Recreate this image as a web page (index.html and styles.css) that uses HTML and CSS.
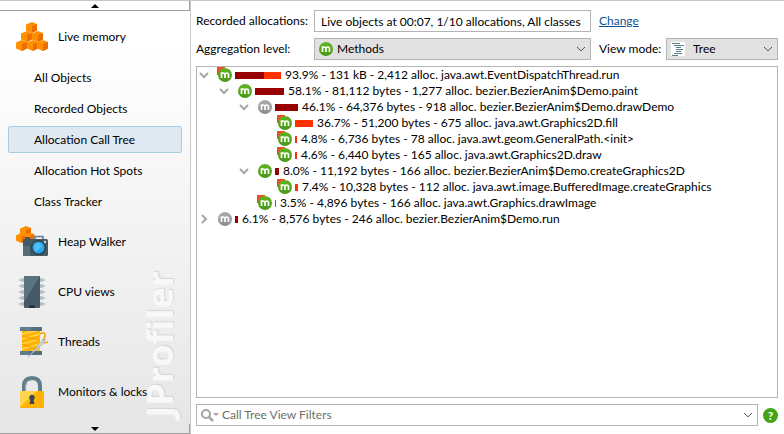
FILE: index.html
```
<!DOCTYPE html>
<html lang="en">
<head>
<meta charset="utf-8">
<title>JProfiler</title>
<link rel="stylesheet" href="styles.css">
</head>
<body>
<svg class="defs" aria-hidden="true">
  <defs>
    <linearGradient id="green" x1="0" y1="0" x2="0" y2="1"><stop offset="0" stop-color="#62b426"/><stop offset="1" stop-color="#479a12"/></linearGradient>
    <linearGradient id="gray" x1="0" y1="0" x2="0" y2="1"><stop offset="0" stop-color="#acacac"/><stop offset="1" stop-color="#8d8d8d"/></linearGradient>
    <symbol id="m" viewBox="0 0 14 14"><path d="M3.500 10V4.300M3.500 6Q3.800 5 5.200 5T7 6.500V10M7 6.500Q7.200 5 8.700 5T10.500 6.500V10" fill="none" stroke="#fff" stroke-width="1.700"/></symbol>
    <symbol id="method" viewBox="0 0 16 16"><circle cx="8" cy="8" r="7" fill="url(#green)"/><use href="#m" x="1" y="1" width="14" height="14"/></symbol>
    <symbol id="leaf" viewBox="0 0 16 16"><path d="M0 0H8V8H0Z" fill="#f04e23"/><circle cx="8" cy="8" r="7" fill="url(#green)"/><use href="#m" x="1" y="1" width="14" height="14"/></symbol>
    <symbol id="bridge" viewBox="0 0 16 16"><circle cx="8" cy="8" r="7" fill="url(#gray)"/><use href="#m" x="1" y="1" width="14" height="14"/></symbol>
    <symbol id="down" viewBox="0 0 10 6"><path d="M1 1L5 4.800L9 1" fill="none" stroke="currentColor"/></symbol>
    <symbol id="cube" viewBox="0 0 12 11"><path d="M0 2.500L6 0L11 2V8.500L6 11L0 8.500Z" fill="#ff9100"/><path d="M6 4L11 2V8.500L6 11Z" fill="#ef6c00"/></symbol>
  </defs>
</svg>
<div class="app">
  <nav class="sidebar">
    <button class="scroll" aria-label="Scroll up"><svg width="8" height="4" viewBox="0 0 8 4"><path d="M4 0L8 4H0Z"/></svg></button>
    <div class="views">
      <a class="section" href="#">
        <svg class="big" viewBox="0 0 32 32"><use href="#cube" x="10" y="1" width="12" height="11"/><use href="#cube" x="5" y="10" width="12" height="11"/><use href="#cube" x="16" y="10" width="12" height="11"/><use href="#cube" x="0" y="19" width="12" height="11"/><use href="#cube" x="11" y="19" width="12" height="11"/><use href="#cube" x="21" y="19" width="12" height="11"/></svg>
        Live memory</a>
      <div class="items">
        <a class="item" href="#">All Objects</a>
        <a class="item" href="#">Recorded Objects</a>
        <a class="item selected" href="#">Allocation Call Tree</a>
        <a class="item" href="#">Allocation Hot Spots</a>
        <a class="item" href="#">Class Tracker</a>
      </div>
      <a class="section" href="#">
        <svg class="big" viewBox="0 0 32 32"><use href="#cube" x="4" y="0" width="12" height="11"/><use href="#cube" x="0" y="7" width="11" height="10"/><use href="#cube" x="9" y="6" width="10" height="10"/><path d="M19 14V10.500H27V14" fill="none" stroke="#607d8b" stroke-width="1.600"/><path d="M9 11H14V14H9Z" fill="#455a64"/><rect x="7" y="13" width="25" height="17" rx="1.500" fill="#455a64"/><path d="M7 20H14V30H8Q7 30 7 29Z" fill="#546e7a"/><circle cx="22.500" cy="21.500" r="7.500" fill="#2e4149"/><circle cx="22.500" cy="21.500" r="6" fill="#29a6ee"/><path d="M18 21A5 5 0 0 1 23 17L26 20L20 26Z" fill="#4fc3f7"/><circle cx="29" cy="16" r="1.200" fill="#cfd8dc"/></svg>
        Heap Walker</a>
      <a class="section" href="#">
        <svg class="big" viewBox="0 0 32 32"><path d="M3 4H29M3 10H29M3 16H29M3 22H29M3 28H29" stroke="#b0bec5" stroke-width="1.500"/><path d="M5 4H27M5 10H27M5 16H27M5 22H27M5 28H27" stroke="#b0bec5" stroke-width="3.500"/><rect x="8" width="16" height="32" rx="1" fill="#455a64"/><path d="M9 0H24L8 26V1Z" fill="#5b747f"/><path d="M13 32A3 3 0 0 1 19 32Z" fill="#263238"/></svg>
        CPU views</a>
      <a class="section" href="#">
        <svg class="big" viewBox="0 0 32 32"><path d="M6 3H24V29H6Z" fill="#ffb300"/><path d="M6 8L24 4M6 13L24 8M6 18L24 13M6 23L24 18M6 28L24 23" stroke="#ffd54f" stroke-width="1.500"/><path d="M6 10L24 14M6 18L22 24" stroke="#ff9800"/><path d="M4 1H26V5H4ZM4 25H26V29H4Z" fill="#546e7a"/><path d="M4 1H15V5H4ZM4 25H13V29H4Z" fill="#607d8b"/><path d="M24 8Q29 5 29 9T27 14Q27 18 32 16" fill="none" stroke="#ffa000" stroke-width="1.500"/><path d="M12 31L26 15L29 13L28 17Z" fill="#cfd8dc" stroke="#90a4ae" stroke-width=".6"/></svg>
        Threads</a>
      <a class="section" href="#">
        <svg class="big" viewBox="0 0 32 32"><path d="M8 16V10Q8 2 16 2T24 10V16" fill="none" stroke="#607d8b" stroke-width="4"/><path d="M9.500 15V10Q10 4 16 4" fill="none" stroke="#90a4ae" stroke-width="1.200"/><rect x="4" y="15" width="24" height="17" rx="1" fill="#ffb300"/><path d="M4 15H21L4 31Z" fill="#ffd54f"/><circle cx="16" cy="21.500" r="2.700" fill="#37474f"/><path d="M15 22H17L18.500 28H13.500Z" fill="#37474f"/></svg>
        Monitors &amp; locks</a>
      <span class="watermark">JProfiler</span>
    </div>
    <button class="scroll" aria-label="Scroll down"><svg width="8" height="4" viewBox="0 0 8 4"><path d="M0 0H8L4 4Z"/></svg></button>
  </nav>
  <main class="content">
    <div class="options">
      <label for="recorded">Recorded allocations:</label>
      <input id="recorded" class="field" type="text" readonly value="Live objects at 00:07, 1/10 allocations, All classes">
      <a class="change" href="#">Change</a>
      <label for="aggregation">Aggregation level:</label>
      <div class="combo">
        <svg class="lead" width="16" height="16"><use href="#method"/></svg>
        <select id="aggregation"><option>Methods</option></select>
        <svg class="arrow" width="10" height="6"><use href="#down"/></svg>
      </div>
      <label for="mode">View mode:</label>
      <div class="combo mode">
        <svg class="lead" width="14" height="14" viewBox="0 0 14 14"><path d="M0 0H14V14H0Z" fill="#fff"/><path d="M1 1.500H9M3 3.500H13M5 5.500H10M5 7.500H12M5 9.500H10M3 11.500H11M1 13.500H7" stroke="#607d8b"/></svg>
        <select id="mode"><option>Tree</option></select>
        <svg class="arrow" width="10" height="6"><use href="#down"/></svg>
      </div>
    </div>
    <ul class="tree">
      <li><div class="row"><svg class="twist" viewBox="0 0 10 10"><path d="M1 3L5 7L9 3"/></svg><svg class="node"><use href="#leaf"/></svg><svg class="bar" width="46"><rect width="29" height="7" fill="#960000"/><rect x="29" width="17" height="7" fill="#ff3200"/></svg>93.9% - 131 kB - 2,412 alloc. java.awt.EventDispatchThread.run</div>
        <ul>
          <li><div class="row"><svg class="twist" viewBox="0 0 10 10"><path d="M1 3L5 7L9 3"/></svg><svg class="node"><use href="#method"/></svg><svg class="bar" width="29"><rect width="29" height="7" fill="#960000"/></svg>58.1% - 81,112 bytes - 1,277 alloc. bezier.BezierAnim$Demo.paint</div>
            <ul>
              <li><div class="row"><svg class="twist" viewBox="0 0 10 10"><path d="M1 3L5 7L9 3"/></svg><svg class="node"><use href="#bridge"/></svg><svg class="bar" width="23"><rect width="23" height="7" fill="#960000"/></svg>46.1% - 64,376 bytes - 918 alloc. bezier.BezierAnim$Demo.drawDemo</div>
                <ul>
                  <li><div class="row"><span class="twist"></span><svg class="node"><use href="#leaf"/></svg><svg class="bar" width="18"><rect width="18" height="7" fill="#ff3200"/></svg>36.7% - 51,200 bytes - 675 alloc. java.awt.Graphics2D.fill</div></li>
                  <li><div class="row"><span class="twist"></span><svg class="node"><use href="#leaf"/></svg><svg class="bar" width="2"><rect width="2" height="7" fill="#ff3200"/></svg>4.8% - 6,736 bytes - 78 alloc. java.awt.geom.GeneralPath.&lt;init&gt;</div></li>
                  <li><div class="row"><span class="twist"></span><svg class="node"><use href="#leaf"/></svg><svg class="bar" width="2"><rect width="2" height="7" fill="#ff3200"/></svg>4.6% - 6,440 bytes - 165 alloc. java.awt.Graphics2D.draw</div></li>
                </ul>
              </li>
              <li><div class="row"><svg class="twist" viewBox="0 0 10 10"><path d="M1 3L5 7L9 3"/></svg><svg class="node"><use href="#method"/></svg><svg class="bar" width="4"><rect width="4" height="7" fill="#960000"/></svg>8.0% - 11,192 bytes - 166 alloc. bezier.BezierAnim$Demo.createGraphics2D</div>
                <ul>
                  <li><div class="row"><span class="twist"></span><svg class="node"><use href="#leaf"/></svg><svg class="bar" width="3"><rect width="3" height="7" fill="#ff3200"/></svg>7.4% - 10,328 bytes - 112 alloc. java.awt.image.BufferedImage.createGraphics</div></li>
                </ul>
              </li>
              <li><div class="row"><span class="twist"></span><svg class="node"><use href="#leaf"/></svg><svg class="bar" width="1"><rect width="1" height="7" fill="#ff3200"/></svg>3.5% - 4,896 bytes - 166 alloc. java.awt.Graphics.drawImage</div></li>
            </ul>
          </li>
        </ul>
      </li>
      <li><div class="row"><svg class="twist" viewBox="0 0 10 10"><path d="M3 1L7 5L3 9"/></svg><svg class="node"><use href="#bridge"/></svg><svg class="bar" width="3"><rect width="3" height="7" fill="#960000"/></svg>6.1% - 8,576 bytes - 246 alloc. bezier.BezierAnim$Demo.run</div></li>
    </ul>
    <div class="filters">
      <div class="search">
        <svg width="18" height="13" viewBox="0 0 18 13"><circle cx="5" cy="5" r="4" fill="none" stroke="#a5a5a5" stroke-width="2"/><path d="M8 8L12 12" stroke="#a5a5a5" stroke-width="2.500"/><path d="M12 4H18L15 7Z" fill="#a5a5a5"/></svg>
        <input type="text" aria-label="Call Tree View Filters" placeholder="Call Tree View Filters">
        <svg width="10" height="6"><use href="#down"/></svg>
      </div>
      <button class="help" aria-label="Help">?</button>
    </div>
  </main>
</div>
</body>
</html>
```
FILE: styles.css
```
* { box-sizing: border-box; }
body {
  margin: 0;
  font: 12px/16px Lato, "Open Sans", sans-serif;
  color: #000;
  background: #fff;
}
.defs { position: absolute; width: 0; height: 0; }
svg { flex: none; }
a { color: inherit; text-decoration: none; }
input, select, button { font: inherit; color: inherit; }

.app {
  display: grid;
  grid-template-columns: 191px minmax(0, 1fr);
  height: 100vh;
  border-top: 1px solid #c8c8c8;
}

.sidebar {
  display: flex;
  flex-direction: column;
  min-height: 0;
  border-right: 1px solid #c8c8c8;
  background: linear-gradient(#fff, #fff 10%, #e6e6e6);
}
.scroll {
  display: flex;
  align-items: center;
  justify-content: center;
  flex: none;
  height: 10px;
  padding: 0;
  border: 1px solid #a0a0a0;
  border-width: 0 1px 1px 0;
  background: none;
}
.views {
  position: relative;
  flex: 1;
  min-height: 0;
  padding-top: 1px;
  overflow: hidden;
}
.section {
  position: relative;
  z-index: 1;
  display: flex;
  align-items: center;
  gap: 10px;
  height: 50px;
  padding-left: 16px;
}
.big { width: 32px; height: 32px; }
.items {
  display: flex;
  flex-direction: column;
  gap: 4px;
  padding: 2px 8px;
}
.item {
  padding: 5px 25px;
  border: 1px solid transparent;
  border-radius: 2px;
  line-height: 15px;
}
.selected {
  border-color: #a9cce3;
  background: #dfe9f1;
}
.watermark {
  position: absolute;
  right: 6px;
  bottom: 6px;
  writing-mode: vertical-rl;
  transform: rotate(180deg);
  font: 700 36px/48px "Open Sans", sans-serif;
  color: #f8f8f8;
  text-shadow: 1px 1px 1px #d4d4d4;
}

.content {
  display: flex;
  flex-direction: column;
  gap: 6px;
  min-width: 0;
  padding: 9px 6px 8px 5px;
}
.options {
  display: grid;
  grid-template-columns: 118px minmax(0, 1fr) 75px 112px;
  row-gap: 6px;
  align-items: center;
  white-space: nowrap;
}
.change {
  grid-column: 3 / 5;
  padding-left: 8px;
  color: #0a5299;
  text-decoration: underline;
}
.options .combo + label { padding-left: 8px; }
.field, .combo select {
  width: 100%;
  height: 22px;
  border: 1px solid #b4b4b4;
  border-radius: 0;
}
.field { padding: 0 6px; background: #fff; }
.combo { position: relative; }
.combo select {
  display: block;
  padding: 0 22px;
  background: #e1e1e1;
  appearance: none;
}
.mode select { padding-left: 26px; }
.lead { position: absolute; left: 4px; top: 3px; }
.mode .lead { top: 4px; left: 5px; }
.arrow { position: absolute; right: 5px; top: 8px; color: #555; }

.tree {
  flex: 1;
  min-height: 0;
  overflow: hidden;
  border: 1px solid #b4b4b4;
}
.tree, .tree ul { margin: 0; padding: 0; list-style: none; }
.tree ul { padding-left: 20px; }
.row {
  display: flex;
  align-items: center;
  height: 16px;
  padding-left: 2px;
  white-space: nowrap;
}
.twist {
  width: 10px;
  height: 10px;
  margin-right: 8px;
  fill: none;
  stroke: #a6a6a6;
  stroke-width: 2;
}
.node { width: 16px; height: 16px; margin-right: 2px; }
.bar { height: 7px; margin-right: 4px; }

.filters { display: flex; align-items: center; gap: 5px; }
.search {
  display: flex;
  align-items: center;
  flex: 1;
  gap: 3px;
  height: 22px;
  padding: 0 4px;
  border: 1px solid #b4b4b4;
  color: #555;
}
.search input {
  flex: 1;
  min-width: 0;
  padding: 0;
  border: 0;
  outline: 0;
  background: none;
}
.search input::placeholder { color: #6e6e6e; opacity: 1; }
.help {
  width: 15px;
  height: 15px;
  padding: 0;
  border: 0;
  border-radius: 50%;
  background: #43a316;
  color: #fff;
  font-weight: 700;
  line-height: 15px;
}
```
